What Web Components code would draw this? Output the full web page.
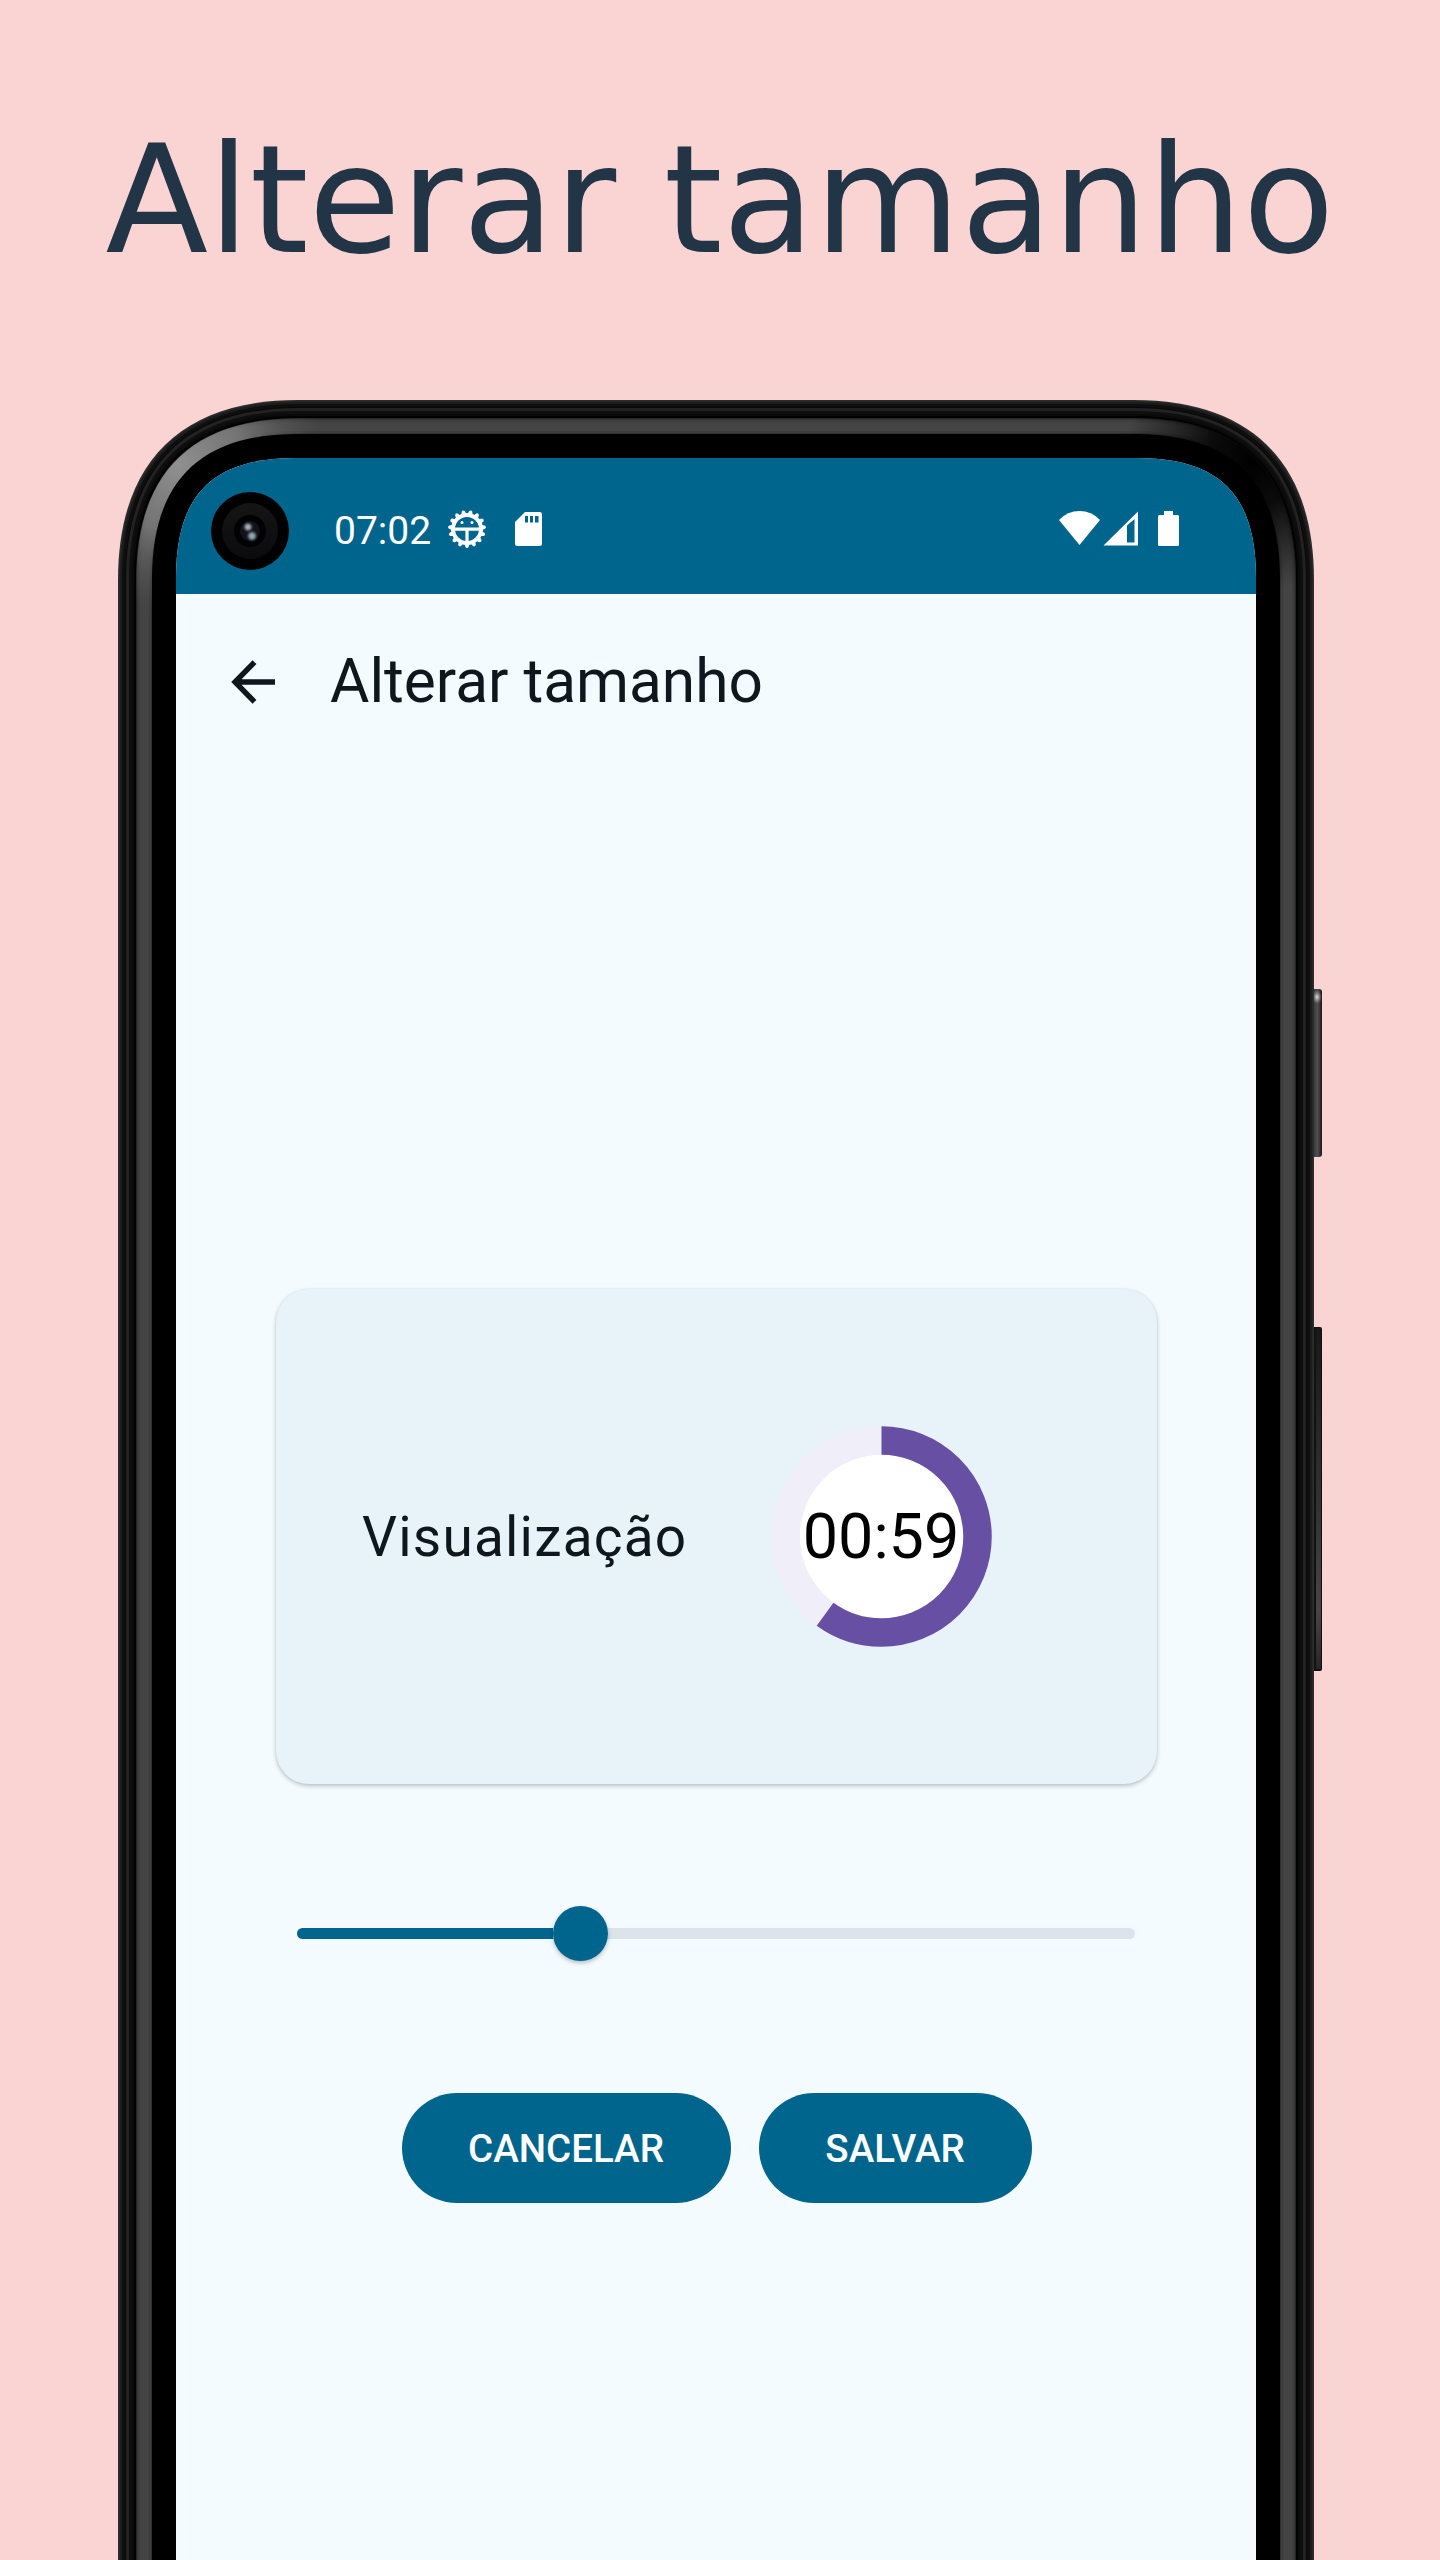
<!DOCTYPE html>
<html lang="pt-BR">
<head>
<meta charset="utf-8">
<title>Alterar tamanho</title>
<style>
body { margin: 0; background: #fad3d3; }
</style>
</head>
<body>
<promo-page heading="Alterar tamanho">
  <phone-frame>
    <status-bar time="07:02"></status-bar>
    <app-bar>Alterar tamanho</app-bar>
    <preview-card label="Visualização"><timer-ring value="60">00:59</timer-ring></preview-card>
    <size-slider></size-slider>
    <button-row><pill-button style="width:329px">CANCELAR</pill-button><pill-button style="width:273px">SALVAR</pill-button></button-row>
  </phone-frame>
</promo-page>
<script>
class Base extends HTMLElement {
  connectedCallback() {
    if (!this.shadowRoot) this.attachShadow({ mode: 'open' }).innerHTML = this.view();
  }
}

customElements.define('promo-page', class extends Base {
  view() {
    return `<style>
      :host { display: flex; flex-direction: column; align-items: center; width: 1440px; height: 2560px; overflow: hidden; background: #fad3d3; }
      h1 { margin: 0; height: 400px; box-sizing: border-box; padding-top: 112px; font: 400 150px/176px "DejaVu Sans", sans-serif; color: #223547; white-space: nowrap; flex: none; }
      .stage { width: 1204px; }
    </style><h1>${this.getAttribute('heading')}</h1><div class="stage"><slot></slot></div>`;
  }
});

// Continuous-curvature outline of the phone, inset by d pixels.
function outline(d) {
  const E = 180 - d * 1.03, o = 46 - .293 * d, k = (4 - 8 * o / E) / 3, c = E * (1 - k);
  const l = d, t = d, r = 1196 - d, b = 2300;
  return `M${l} ${b}V${t + E}C${l} ${t + c} ${l + c} ${t} ${l + E} ${t}H${r - E}C${r - c} ${t} ${r} ${t + c} ${r} ${t + E}V${b}Z`;
}

customElements.define('phone-frame', class extends Base {
  view() {
    const rims = [[0,'#2e2e2e'],[1,'#262827'],[2,'#1c1c1c'],[4,'#0e0e0e'],[7,'#080808'],[8,'#222'],[11,'#0e0e0e'],[14,'#0a0a0a'],[16,'#020202']];
    const grey = [[18,.55],[19,.8],[20,.9],[22,1],[31,.9],[33,.72]];
    return `<style>
      :host { display: flex; position: relative; box-sizing: border-box; width: 1204px; height: 2160px; padding: 58px 0 0 58px; }
      .shell { position: absolute; left: 0; top: 0; }
      .screen { position: relative; width: 1080px; height: 2102px; background: #f3fbff; clip-path: path("${screenPath()}"); display: flex; flex-direction: column; align-items: center; flex: none; }
    </style>
    <svg class="shell" width="1204" height="2160" viewBox="0 0 1204 2160">
      <defs>
        <linearGradient id="b" x1="0" x2="1"><stop offset="0" stop-color="#111"/><stop offset=".3" stop-color="#3c3c3c"/><stop offset=".6" stop-color="#505050"/><stop offset="1" stop-color="#181818"/></linearGradient>
        <linearGradient id="v" x1="0" x2="0" y1="0" y2="1"><stop offset="0" stop-color="#171818"/><stop offset=".5" stop-color="#303131"/><stop offset=".83" stop-color="#464646"/><stop offset="1" stop-color="#262626"/></linearGradient>
        <radialGradient id="gl"><stop offset="0" stop-color="#ddd"/><stop offset="1" stop-color="#999" stop-opacity="0"/></radialGradient>
        <radialGradient id="hi" gradientUnits="userSpaceOnUse" cx="60" cy="64" r="150"><stop offset="0" stop-color="#909090"/><stop offset=".45" stop-color="#808080" stop-opacity=".8"/><stop offset="1" stop-color="#555" stop-opacity="0"/></radialGradient>
        <radialGradient id="lo" gradientUnits="userSpaceOnUse" cx="1135" cy="62" r="130"><stop offset="0" stop-color="#000"/><stop offset=".35" stop-color="#050505" stop-opacity=".9"/><stop offset="1" stop-color="#111" stop-opacity="0"/></radialGradient>
      </defs>
      <rect x="1193" y="589" width="11" height="168" rx="3" fill="url(#b)"/><ellipse cx="1199" cy="597" rx="5" ry="7" fill="url(#gl)"/>
      <rect x="1193" y="927" width="11" height="344" rx="2" fill="#111"/><rect x="1198" y="928" width="5" height="341" fill="url(#v)"/>
      ${rims.map(([d, c]) => `<path d="${outline(d)}" fill="${c}"/>`).join('')}
      ${grey.map(([d, f]) => { const g = Math.round(68 * f); return `<path d="${outline(d)}" fill="rgb(${g},${g},${g})"/>`; }).join('')}
      <path d="${outline(18.5)}" fill="url(#hi)"/><path d="${outline(18)}" fill="url(#lo)"/>
      <path d="${outline(34)}" fill="#000"/>
    </svg>
    <div class="screen"><slot></slot></div>`;
  }
});

function screenPath() {
  const E = 120, c = 36.5, w = 1080;
  return `M0 2110V${E}C0 ${c} ${c} 0 ${E} 0H${w - E}C${w - c} 0 ${w} ${c} ${w} ${E}V2110Z`;
}

customElements.define('status-bar', class extends Base {
  view() {
    let teeth = '';
    for (let i = 0; i < 15; i++) teeth += `<path d="M-2.9-13.5L-1.6-18Q0-20 1.6-18L2.9-13.5Z" transform="rotate(${180 + i * 24})"/>`;
    return `<style>
      :host { display: flex; align-items: center; box-sizing: border-box; width: 1080px; height: 136px; padding: 10px 76px 0 35px; background: #00658c; color: #fff; flex: none; }
      .time { font: 400 39px/46px Roboto, sans-serif; margin-left: 45px; width: 98px; }
      svg { display: block; flex: none; }
      .gap { flex: 1; }
    </style>
    <svg width="78" height="78" viewBox="0 0 78 78">
      <defs>
        <radialGradient id="a"><stop offset="0" stop-color="#b8bec4"/><stop offset=".4" stop-color="#878c92"/><stop offset="1" stop-color="#222833" stop-opacity="0"/></radialGradient>
        <radialGradient id="c"><stop offset="0" stop-color="#a2b8c2"/><stop offset=".45" stop-color="#70838c"/><stop offset="1" stop-color="#1b2030" stop-opacity="0"/></radialGradient>
        <linearGradient id="r" x2="0" y2="1"><stop stop-color="#151515"/><stop offset="1" stop-color="#0b0b0e"/></linearGradient>
      </defs>
      <circle cx="39" cy="39" r="39"/><circle cx="39" cy="39" r="28" fill="url(#r)"/><circle cx="39" cy="39" r="16" fill="#020203"/><circle cx="39" cy="39" r="10" fill="#11121b"/>
      <circle cx="37" cy="35" r="6" fill="url(#a)"/><circle cx="41" cy="44" r="6.500" fill="url(#c)"/>
    </svg>
    <span class="time">${this.getAttribute('time')}</span>
    <svg style="margin:-4px 0 0 15px" width="40" height="40" viewBox="-20 -20 40 40" fill="#fff">
      ${teeth}<circle r="14" fill="none" stroke="#fff" stroke-width="4"/>
      <path d="M-14-1.6H14V1.800H1.600V14H-1.600V1.800H-14Z"/><circle cx="-5" cy="-6.5" r="1.500"/><circle cx="5" cy="-6.5" r="1.500"/>
    </svg>
    <svg style="margin:-4px 0 0 28px" width="27" height="34" viewBox="0 0 27 34"><path fill="#fff" fill-rule="evenodd" d="M10 0H24.5Q27 0 27 2.5V31.500Q27 34 24.500 34H2.500Q0 34 0 31.500V10ZM10 4V10.500H13V4ZM15 4V10.500H18V4ZM20 4V10.500H23.500V4Z"/></svg>
    <span class="gap"></span>
    <svg style="margin-top:-6px" width="121" height="36" viewBox="0 0 121 36" fill="#fff">
      <path d="M0 10Q8.500 1 20.500 1T41 10L20.500 35Z"/>
      <path fill-rule="evenodd" d="M44.500 35.500L79 1.500V35.500ZM68 15.500V32.500H75.500V9Z"/>
      <path d="M105 1H114V5H118.500Q120 5 120 6.500V34.500Q120 36 118.500 36H100.500Q99 36 99 34.500V6.500Q99 5 100.500 5H105Z"/>
    </svg>`;
  }
});

customElements.define('app-bar', class extends Base {
  view() {
    return `<style>
      :host { display: flex; align-items: center; box-sizing: border-box; width: 1080px; height: 176px; padding-left: 55px; flex: none; color: #0e171b; font: 400 60.400px/72px Roboto, sans-serif; }
      svg { margin-right: 55px; }
    </style><svg width="44" height="44" viewBox="0 0 44 44"><path d="M23.500 2.200L4 22L23.500 41.800M4 22H44" fill="none" stroke="#0e171b" stroke-width="5.400"/></svg><span><slot></slot></span>`;
  }
});

customElements.define('preview-card', class extends Base {
  view() {
    return `<style>
      :host { display: flex; align-items: center; box-sizing: border-box; width: 881px; height: 495px; margin-top: 519px; padding-left: 86.500px; border-radius: 33px; background: #e7f3f9; box-shadow: 0 2px 4px rgba(0,0,0,.22), 0 0 2px rgba(0,0,0,.08); flex: none; }
      .label { font: 400 55px/66px Roboto, sans-serif; letter-spacing: 1.200px; color: #0e171b; width: 408.500px; white-space: nowrap; }
    </style><span class="label">${this.getAttribute('label')}</span><slot></slot>`;
  }
});

customElements.define('timer-ring', class extends Base {
  view() {
    return `<style>
      :host { display: grid; place-items: center; width: 221px; height: 221px; flex: none; color: #000; font: 400 62.900px/72px Roboto, sans-serif; }
      svg, span { grid-area: 1 / 1; }
    </style>
    <svg width="221" height="221" viewBox="0 0 221 221"><circle cx="110.500" cy="110.500" r="82" fill="#fff"/>
      <circle cx="110.500" cy="110.500" r="96" fill="none" stroke="#f0eef8" stroke-width="28.500"/>
      <circle cx="110.500" cy="110.500" r="96" fill="none" stroke="#6750a4" stroke-width="28.500" pathLength="100" stroke-dasharray="${this.getAttribute('value')} 100" transform="rotate(-90 110.500 110.500)"/></svg>
    <span><slot></slot></span>`;
  }
});

customElements.define('size-slider', class extends Base {
  view() {
    return `<style>
      :host { display: flex; align-items: center; width: 838px; height: 55px; margin: 122px 0 0; flex: none; }
      .on { width: 256px; height: 11px; border-radius: 6px 0 0 6px; background: #00658c; }
      .off { flex: 1; height: 11px; border-radius: 0 6px 6px 0; background: #dce3ea; }
      .knob { width: 55px; height: 55px; border-radius: 50%; background: #00658c; box-shadow: 0 2px 4px rgba(0,0,0,.25); z-index: 1; }
    </style><i class="on"></i><i class="knob"></i><i class="off"></i>`;
  }
});

customElements.define('button-row', class extends Base {
  view() {
    return `<style>:host { display: flex; gap: 28px; margin: 132px 0 0 2px; flex: none; }</style><slot></slot>`;
  }
});

customElements.define('pill-button', class extends Base {
  view() {
    return `<style>:host { display: flex; align-items: center; justify-content: center; box-sizing: border-box; height: 110px; padding: 2px 1px 0 0; border-radius: 55px; background: #00658c; color: #fff; font: 500 38.500px/46px Roboto, sans-serif; }</style><span><slot></slot></span>`;
  }
});
</script>
</body>
</html>
